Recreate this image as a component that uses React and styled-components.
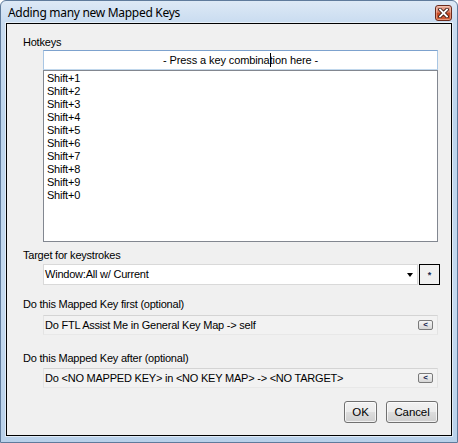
import React from "react";
import styled, { createGlobalStyle } from "styled-components";

const GlobalStyle = createGlobalStyle`
  html, body {
    margin: 0;
    padding: 0;
    background: #ffffff;
  }
  * {
    box-sizing: border-box;
  }
`;

const Window = styled.div`
  width: 458px;
  height: 443px;
  border: 1px solid #5f7b9c;
  border-radius: 6px 6px 0 0;
  background: linear-gradient(to bottom, #dde9f6 0px, #c9dcf0 22px, #bcd4ec 120px, #c4d9ef 300px, #b9d1ea 443px);
  display: flex;
  flex-direction: column;
  overflow: hidden;
`;

const TitleBar = styled.div`
  height: 22px;
  display: flex;
  align-items: flex-start;
  justify-content: space-between;
  padding: 0 5px 0 7px;
`;

const Title = styled.div`
  font-family: "Noto Sans", "Open Sans", sans-serif;
  font-size: 12px;
  line-height: 16px;
  padding-top: 4px;
  color: #000000;
  letter-spacing: -0.3px;
`;

const CloseButton = styled.div`
  margin-top: 4px;
  width: 17px;
  height: 16px;
  border: 1px solid #6b2a1c;
  border-radius: 3px;
  background: linear-gradient(to bottom, #eab1a2 0%, #db7a60 45%, #c6461f 50%, #d0603c 100%);
  box-shadow: inset 0 0 0 1px rgba(255, 220, 200, 0.45);
  display: flex;
  align-items: center;
  justify-content: center;
`;

const Client = styled.div`
  flex: 1;
  margin: 0 5px 6px 5px;
  border: 1px solid #000000;
  box-shadow: 0 0 0 1px rgba(255, 255, 255, 0.55);
  background: #f0f0f0;
  padding: 0 13px 0 16px;
  display: flex;
  flex-direction: column;
  font-family: "Liberation Sans", Arial, sans-serif;
  font-size: 11px;
  letter-spacing: -0.22px;
  color: #000000;
`;

const Label = styled.div`
  margin-top: ${(p) => p.$top}px;
  line-height: 13px;
  height: 13px;
  white-space: nowrap;
`;

const KeyInput = styled.div`
  margin: 1px 0 0 20px;
  height: 20px;
  background: #ffffff;
  border: 1px solid;
  border-color: #7da2ce #a9c6e3 #c0d7ec #a9c6e3;
  line-height: 18px;
  text-align: center;
  font-size: 11px;
  letter-spacing: -0.1px;
  white-space: nowrap;
`;

const Caret = styled.span`
  display: inline-block;
  width: 0;
  height: 14px;
  border-left: 1px solid #000000;
  margin-right: -1px;
  vertical-align: -3px;
`;

const ListBox = styled.div`
  margin-left: 20px;
  height: 172px;
  background: #ffffff;
  border: 1px solid #828790;
  padding: 1px 3px;
  overflow: hidden;
`;

const ListItem = styled.div`
  line-height: 13px;
  height: 13px;
  white-space: nowrap;
`;

const ComboRow = styled.div`
  margin: 2px -2px 0 20px;
  display: flex;
  gap: 1px;
`;

const Combo = styled.div`
  flex: 1;
  height: 21px;
  background: #ffffff;
  border: 1px solid #d9d9d9;
  display: flex;
  align-items: center;
  justify-content: space-between;
  padding: 0 4px 1px 1px;
  line-height: 18px;
`;

const Arrow = styled.span`
  width: 0;
  height: 0;
  border-left: 3.5px solid transparent;
  border-right: 3.5px solid transparent;
  border-top: 4px solid #000000;
  margin-top: 1px;
`;

const StarButton = styled.div`
  width: 21px;
  height: 21px;
  border: 1px solid #000000;
  background: #f0f0f0;
  display: flex;
  align-items: center;
  justify-content: center;
  font-size: 9px;
  font-weight: bold;
  line-height: 9px;
  padding-top: 2px;
  color: #1a2a50;
`;

const ReadOnlyBox = styled.div`
  margin: ${(p) => p.$top}px 0 0 20px;
  height: 20px;
  background: #f2f2f2;
  border: 1px solid;
  border-color: #d4d4d4 #e3e3e3 #e8e8e8 #e3e3e3;
  display: flex;
  align-items: center;
  justify-content: space-between;
  padding: 0 4px 0 1px;
  line-height: 18px;
  white-space: nowrap;
`;

const PickButton = styled.div`
  width: 15px;
  height: 10px;
  border: 1px solid #7a7a7a;
  border-radius: 2px;
  background: linear-gradient(to bottom, #f6f6f6 0%, #e6e6e6 50%, #d6d6d6 100%);
  display: flex;
  align-items: center;
  justify-content: center;
  font-size: 8px;
  font-weight: bold;
  line-height: 8px;
  color: #10204a;
`;

const ButtonRow = styled.div`
  margin-top: 13px;
  display: flex;
  justify-content: flex-end;
  gap: 9px;
`;

const Button = styled.div`
  width: ${(p) => p.$w}px;
  height: 22px;
  border: 1px solid #707070;
  border-radius: 3px;
  background: linear-gradient(to bottom, #f2f2f2 0%, #ebebeb 50%, #dddddd 51%, #cfcfcf 100%);
  box-shadow: inset 0 0 0 1px rgba(255, 255, 255, 0.7);
  display: flex;
  align-items: center;
  justify-content: center;
  font-size: 11.5px;
  line-height: 14px;
  letter-spacing: -0.1px;
`;

const hotkeys = ["1", "2", "3", "4", "5", "6", "7", "8", "9", "0"];

const CloseIcon = () => (
  <svg width="11" height="10" viewBox="0 0 11 10">
    <path d="M2 1.5 L9 8.5 M9 1.5 L2 8.5" stroke="#3b1a12" strokeWidth="3.6" strokeLinecap="square" />
    <path d="M2 1.5 L9 8.5 M9 1.5 L2 8.5" stroke="#ffffff" strokeWidth="1.8" strokeLinecap="square" />
  </svg>
);

export default function App() {
  return (
    <>
      <GlobalStyle />
      <Window>
        <TitleBar>
          <Title>Adding many new Mapped Keys</Title>
          <CloseButton>
            <CloseIcon />
          </CloseButton>
        </TitleBar>
        <Client>
          <Label $top={12}>Hotkeys</Label>
          <KeyInput>
            - Press a key combina<Caret />tion here -
          </KeyInput>
          <ListBox>
            {hotkeys.map((k) => (
              <ListItem key={k}>Shift+{k}</ListItem>
            ))}
          </ListBox>

          <Label $top={7}>Target for keystrokes</Label>
          <ComboRow>
            <Combo>
              <span>Window:All w/ Current</span>
              <Arrow />
            </Combo>
            <StarButton>*</StarButton>
          </ComboRow>

          <Label $top={13}>Do this Mapped Key first (optional)</Label>
          <ReadOnlyBox $top={4}>
            <span>Do FTL Assist Me in General Key Map -&gt; self</span>
            <PickButton>&lt;</PickButton>
          </ReadOnlyBox>

          <Label $top={17}>Do this Mapped Key after (optional)</Label>
          <ReadOnlyBox $top={3}>
            <span>Do &lt;NO MAPPED KEY&gt; in &lt;NO KEY MAP&gt; -&gt; &lt;NO TARGET&gt;</span>
            <PickButton>&lt;</PickButton>
          </ReadOnlyBox>

          <ButtonRow>
            <Button $w={33}>OK</Button>
            <Button $w={52}>Cancel</Button>
          </ButtonRow>
        </Client>
      </Window>
    </>
  );
}
